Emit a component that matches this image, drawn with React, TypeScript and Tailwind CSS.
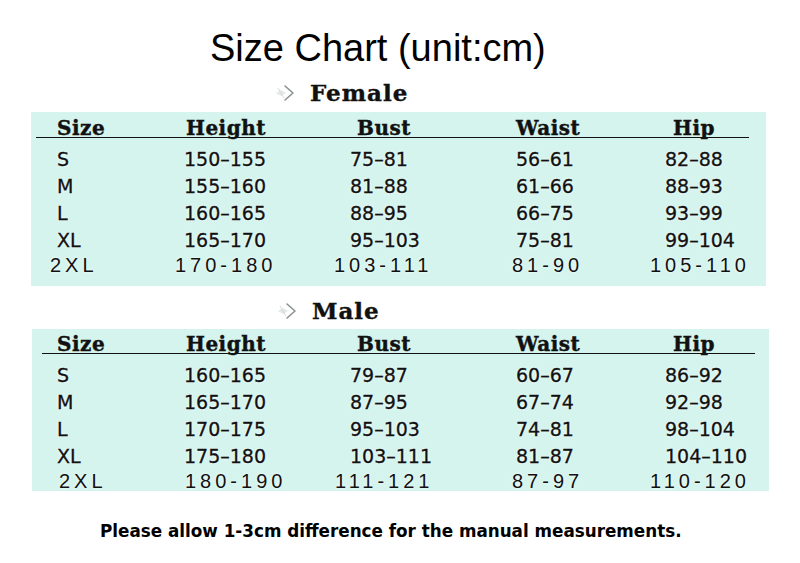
import React from "react";

type Row = [string, string, string, string, string];

const female: Row[] = [
  ["S", "150–155", "75–81", "56–61", "82–88"],
  ["M", "155–160", "81–88", "61–66", "88–93"],
  ["L", "160–165", "88–95", "66–75", "93–99"],
  ["XL", "165–170", "95–103", "75–81", "99–104"],
  ["2XL", "170-180", "103-111", "81-90", "105-110"],
];

const male: Row[] = [
  ["S", "160–165", "79–87", "60–67", "86–92"],
  ["M", "165–170", "87–95", "67–74", "92–98"],
  ["L", "170–175", "95–103", "74–81", "98–104"],
  ["XL", "175–180", "103–111", "81–87", "104–110"],
  ["2XL", "180-190", "111-121", "87-97", "110-120"],
];

function Arrow() {
  return (
    <svg width="26" height="22" viewBox="0 0 26 22" fill="none">
      {/* faint sparkle */}
      <path d="M3 11 L8 8 L13 11 L8 14 Z" fill="#e4e8e8" />
      <path d="M5 6 L11 16" stroke="#d6dada" strokeWidth="1" />
      {/* chevron */}
      <path
        d="M12 4 L20 11 L12 18"
        stroke="#8a9090"
        strokeWidth="1.6"
        strokeLinecap="round"
        strokeLinejoin="round"
      />
    </svg>
  );
}

function Label({ text, pad }: { text: string; pad: string }) {
  return (
    <div className={`flex items-center ${pad}`}>
      <Arrow />
      <span className="ml-[11px] font-['DejaVu_Serif',serif] font-bold text-[23px] leading-[22px] tracking-[1px] text-[#111] [-webkit-text-stroke:0.4px_#111]">
        {text}
      </span>
    </div>
  );
}

function SizeTable({
  rows,
  box,
  head,
  headPad,
  rowCls,
  lastCls,
}: {
  rows: Row[];
  box: string;
  head: string;
  headPad: string;
  rowCls: string;
  lastCls: string;
}) {
  return (
    <div className={`bg-[#d5f4ee] ${box}`}>
      {/* header with underline */}
      <div className={`border-b-[1.5px] border-[#111] ${head}`}>
        <div
          className={`grid grid-cols-[129px_171px_159px_157px_1fr] font-['DejaVu_Serif',serif] font-bold text-[20px] leading-[18px] tracking-[0.5px] text-[#111] [-webkit-text-stroke:0.4px_#111] ${headPad}`}
        >
          <span>Size</span>
          <span>Height</span>
          <span>Bust</span>
          <span>Waist</span>
          <span>Hip</span>
        </div>
      </div>
      <div className="mt-[8px]">
        {rows.map((r, i) => {
          const last = i === rows.length - 1;
          return (
            <div
              key={r[0]}
              className={
                last
                  ? `grid h-[22px] pt-[1px] font-['Liberation_Sans',sans-serif] text-[20px] tracking-[4px] text-[#111] leading-[20px] [text-shadow:0_0_3px_#fff] ${lastCls}`
                  : `grid h-[27px] items-center font-['DejaVu_Sans',sans-serif] text-[19px] leading-[27px] text-[#111] [-webkit-text-stroke:0.3px_#111] [text-shadow:0_0_3px_#fff] ${rowCls}`
              }
            >
              {r.map((c, j) => (
                <span key={j} className="whitespace-nowrap">
                  {c}
                </span>
              ))}
            </div>
          );
        })}
      </div>
    </div>
  );
}

export default function App() {
  return (
    <div className="w-[800px] h-[563px] bg-white overflow-hidden">
      <div className="pt-[30px] pl-[210px]">
        <h1 className="font-['Liberation_Sans',sans-serif] font-normal text-[38px] leading-[36px] text-black">
          Size Chart (unit:cm)
        </h1>
      </div>

      <div className="mt-[16px]">
        <Label text="Female" pad="pl-[273px]" />
      </div>

      <div className="mt-[8px] ml-[31px]">
        <SizeTable
          rows={female}
          box="w-[735px] h-[174px]"
          head="ml-[5px] mr-[17px] pt-[7px]"
          headPad="pl-[21px]"
          rowCls="pl-[26px] grid-cols-[127px_166px_166px_149px_1fr]"
          lastCls="pl-[19px] grid-cols-[125px_159px_178px_138px_1fr]"
        />
      </div>

      <div className="mt-[14px]">
        <Label text="Male" pad="pl-[275px]" />
      </div>

      <div className="mt-[7px] ml-[32px]">
        <SizeTable
          rows={male}
          box="w-[737px] h-[162px]"
          head="ml-[10px] mr-[14px] pt-[6px]"
          headPad="pl-[15px]"
          rowCls="pl-[25px] grid-cols-[127px_166px_166px_149px_1fr]"
          lastCls="pl-[27px] grid-cols-[126px_150px_177px_138px_1fr]"
        />
      </div>

      <p className="mt-[30px] pl-[100px] font-['DejaVu_Sans',sans-serif] font-bold text-[16.8px] leading-[20px] text-black">
        Please allow 1-3cm difference for the manual measurements.
      </p>
    </div>
  );
}
